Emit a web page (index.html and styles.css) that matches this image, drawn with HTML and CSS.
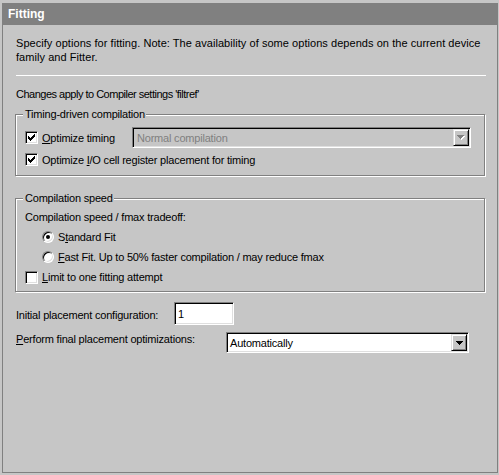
FILE: index.html
```html
<!DOCTYPE html>
<html lang="en">

<head>
    <meta charset="UTF-8">
    <title>Fitting</title>
    <link rel="stylesheet" href="styles.css">
</head>

<body>

    <div class="page">
        <div class="title">Fitting</div>

        <div class="panel">
            <p class="intro">Specify options for fitting. Note: The availability of some options depends on the current device<br>family and Fitter.</p>
            <div class="sep"></div>
            <p class="scope">Changes apply to Compiler settings 'filtref'</p>

            <!-- Timing-driven compilation -->
            <fieldset class="group group-timing">
                <legend>Timing-driven compilation</legend>
                <div class="row row-combo">
                    <label class="check">
                        <span class="box">
                            <svg width="7" height="7" viewBox="0 0 7 7" shape-rendering="crispEdges"><path d="M6 0h1v1H6zM5 1h2v1H5zM0 2h1v1H0zM4 2h3v1H4zM0 3h2v1H0zM3 3h3v1H3zM0 4h5v1H0zM1 5h3v1H1zM2 6h1v1H2z" fill="#000"/></svg>
                        </span>
                        <span><u>O</u>ptimize timing</span>
                    </label>
                    <div class="combo combo-timing disabled">
                        <span class="combo-text">Normal compilation</span>
                        <span class="combo-btn">
                            <svg width="8" height="5" viewBox="0 0 8 5" shape-rendering="crispEdges"><path d="M1 1h7v1H1zM2 2h5v1H2zM3 3h3v1H3zM4 4h1v1H4z" fill="#fff"/><path d="M0 0h7v1H0zM1 1h5v1H1zM2 2h3v1H2zM3 3h1v1H3z" fill="#808080"/></svg>
                        </span>
                    </div>
                </div>
                <div class="row">
                    <label class="check">
                        <span class="box">
                            <svg width="7" height="7" viewBox="0 0 7 7" shape-rendering="crispEdges"><path d="M6 0h1v1H6zM5 1h2v1H5zM0 2h1v1H0zM4 2h3v1H4zM0 3h2v1H0zM3 3h3v1H3zM0 4h5v1H0zM1 5h3v1H1zM2 6h1v1H2z" fill="#000"/></svg>
                        </span>
                        <span>Optimize <u>I</u>/O cell register placement for timing</span>
                    </label>
                </div>
            </fieldset>

            <!-- Compilation speed -->
            <fieldset class="group group-speed">
                <legend>Compilation speed</legend>
                <div class="line">Compilation speed / fmax tradeoff:</div>
                <label class="line option"><span class="radio on"><span class="dot"></span></span><span>S<u>t</u>andard Fit</span></label>
                <label class="line option"><span class="radio"></span><span><u>F</u>ast Fit. Up to 50% faster compilation / may reduce fmax</span></label>
                <label class="line check"><span class="box"></span><span><u>L</u>imit to one fitting attempt</span></label>
            </fieldset>

            <div class="field field-initial">
                <label>Initial placement configuration:</label>
                <div class="edit">1</div>
            </div>

            <div class="field field-final">
                <label><u>P</u>erform final placement optimizations:</label>
                <div class="combo combo-final">
                    <span class="combo-text">Automatically</span>
                    <span class="combo-btn">
                        <svg width="7" height="4" viewBox="0 0 7 4" shape-rendering="crispEdges"><path d="M0 0h7v1H0zM1 1h5v1H1zM2 2h3v1H2zM3 3h1v1H3z" fill="#000"/></svg>
                    </span>
                </div>
            </div>
        </div>
    </div>

</body>
</html>
```

FILE: styles.css
```css
body {
    margin: 0;
    background-color: #c6c6c6;
    font-family: "Liberation Sans", Arial, sans-serif;
    font-size: 11px;
    letter-spacing: -0.2px;
    color: #000;
}

.page {
    margin: 3px 1px 2px 2px;
}

.title {
    height: 22px;
    line-height: 22px;
    padding-left: 6px;
    background-color: #808080;
    color: #fff;
    font-size: 12px;
    font-weight: bold;
    letter-spacing: 0;
}

.panel {
    height: 448px;
    box-sizing: border-box;
    border: 1px solid #808080;
    border-top: none;
}

p {
    margin: 0;
}

.intro {
    padding: 11px 0 0 13px;
    line-height: 14px;
    letter-spacing: 0.05px;
}

.sep {
    height: 1px;
    margin: 11px 11px 0 13px;
    background-color: #fff;
}

.scope {
    margin-top: 11px;
    padding-left: 13px;
    line-height: 14px;
    letter-spacing: -0.5px;
}

u {
    text-decoration: underline;
    text-underline-offset: 1px;
}

/* group boxes */
.group {
    margin: 6px 12px 0 12px;
    padding: 0 0 5px 9px;
    border: 1px solid #808080;
    box-shadow: inset 1px 1px 0 #fff, 1px 1px 0 #fff;
    min-width: 0;
}

.group legend {
    margin-left: -2px;
    padding: 0 1px 0 2px;
    line-height: 14px;
    background-color: #c6c6c6;
}

.group-timing legend + .row {
    margin-top: 6px;
}

.group-speed {
    margin-top: 15px;
    padding-top: 2px;
    padding-bottom: 4px;
}

.row {
    display: flex;
    align-items: center;
    height: 21px;
}

.row + .row {
    margin-top: 1px;
}

.row-combo {
    display: grid;
    grid-template-columns: 107px 339px;
    align-items: center;
}

.line {
    display: flex;
    align-items: center;
    height: 20px;
}

.check {
    display: flex;
    align-items: center;
}

.option {
    padding-left: 17px;
}

/* check box */
.box {
    display: flex;
    align-items: center;
    justify-content: center;
    width: 13px;
    height: 13px;
    box-sizing: border-box;
    margin-right: 4px;
    border: 1px solid;
    border-color: #808080 #fff #fff #808080;
    box-shadow: inset 1px 1px 0 #000, inset -1px -1px 0 #dfdfdf;
    background-color: #fff;
}

.box svg {
    display: block;
}

/* radio button */
.radio {
    display: flex;
    align-items: center;
    justify-content: center;
    width: 12px;
    height: 12px;
    box-sizing: border-box;
    margin-right: 4px;
    border: 1px solid;
    border-color: #808080 #fff #fff #808080;
    border-radius: 50%;
    box-shadow: inset 1px 1px 0 #000, inset -1px -1px 0 #dfdfdf;
    background-color: #fff;
}

.dot {
    width: 4px;
    height: 4px;
    border-radius: 50%;
    background-color: #000;
}

/* combo boxes and edit field */
.combo,
.edit {
    display: flex;
    align-items: center;
    box-sizing: border-box;
    border: 1px solid;
    border-color: #808080 #fff #fff #808080;
    box-shadow: inset 1px 1px 0 #000, inset -1px -1px 0 #dfdfdf;
    background-color: #fff;
}

.combo {
    height: 21px;
    padding: 1px;
}

.combo-text {
    flex: 1;
    padding-left: 2px;
}

.combo.disabled {
    background-color: #c6c6c6;
}

.combo.disabled .combo-text {
    color: #808080;
    padding-left: 3px;
}

.combo-btn {
    display: flex;
    align-items: center;
    justify-content: center;
    width: 16px;
    height: 17px;
    box-sizing: border-box;
    border: 1px solid;
    border-color: #dfdfdf #000 #000 #dfdfdf;
    box-shadow: inset 1px 1px 0 #fff, inset -1px -1px 0 #808080;
    background-color: #c6c6c6;
}

.combo-btn svg {
    display: block;
}

.field {
    display: flex;
    padding-left: 13px;
}

.field-initial {
    margin-top: 10px;
    align-items: center;
}

.field-initial label {
    width: 158px;
    padding-top: 2px;
}

.edit {
    width: 60px;
    height: 23px;
    padding-left: 3px;
}

.field-final {
    margin-top: 7px;
    align-items: flex-start;
}

.field-final label {
    width: 210px;
    padding-top: 1px;
}

.combo-final {
    width: 243px;
}
```
